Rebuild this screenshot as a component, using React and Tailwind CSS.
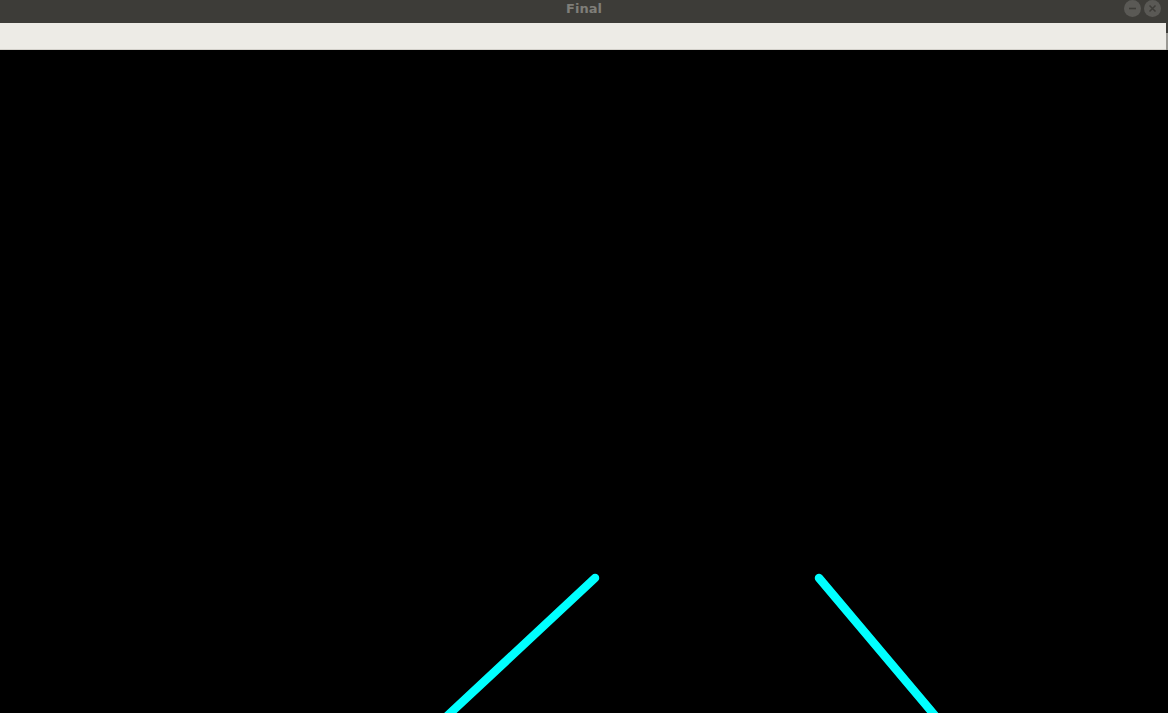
import React from 'react';

const TitleBar = () => (
    <div className="relative h-[23px] bg-[#3d3c38] flex items-start justify-center pt-[2px]">
        <span className="text-[13px] font-bold text-[#7f7e79] leading-[13px]" style={{ fontFamily: '"DejaVu Sans", sans-serif' }}>
            Final
        </span>
        <div className="absolute right-[7px] top-0 flex items-start gap-[3px]">
            <div className="w-[17px] h-[17px] rounded-full bg-[#5a5955] flex items-center justify-center">
                <svg width="9" height="9" viewBox="0 0 9 9">
                    <path d="M1 4.5h7" stroke="#3d3c38" strokeWidth="1.6" />
                </svg>
            </div>
            <div className="w-[17px] h-[17px] rounded-full bg-[#5a5955] flex items-center justify-center">
                <svg width="9" height="9" viewBox="0 0 9 9">
                    <path d="M1.5 1.5l6 6M7.5 1.5l-6 6" stroke="#3d3c38" strokeWidth="1.5" />
                </svg>
            </div>
        </div>
    </div>
);

const Toolbar = () => (
    <div className="flex h-[27px]">
        <div className="flex-1 bg-[#edebe6] border-b border-[#d3d0ca]" />
        <div className="w-[2px] flex flex-col">
            <div className="h-[10px] bg-[#3d3c38]" />
            <div className="flex-1 bg-[#9a9893]" />
        </div>
    </div>
);

// canvas area, lines drawn in canvas coords
const Canvas = () => (
    <div className="flex-1 bg-black overflow-hidden">
        <svg width="1168" height="663" viewBox="0 0 1168 663" className="block">
            <line x1="595" y1="528" x2="445" y2="668" stroke="#00ffff" strokeWidth="8.5" strokeLinecap="round" />
            <line x1="819" y1="528" x2="937" y2="668" stroke="#00ffff" strokeWidth="8.5" strokeLinecap="round" />
        </svg>
    </div>
);

const App = () => {
    return (
        <div className="w-[1168px] h-[713px] flex flex-col overflow-hidden bg-black">
            <TitleBar />
            <Toolbar />
            <Canvas />
        </div>
    );
};

export default App;
